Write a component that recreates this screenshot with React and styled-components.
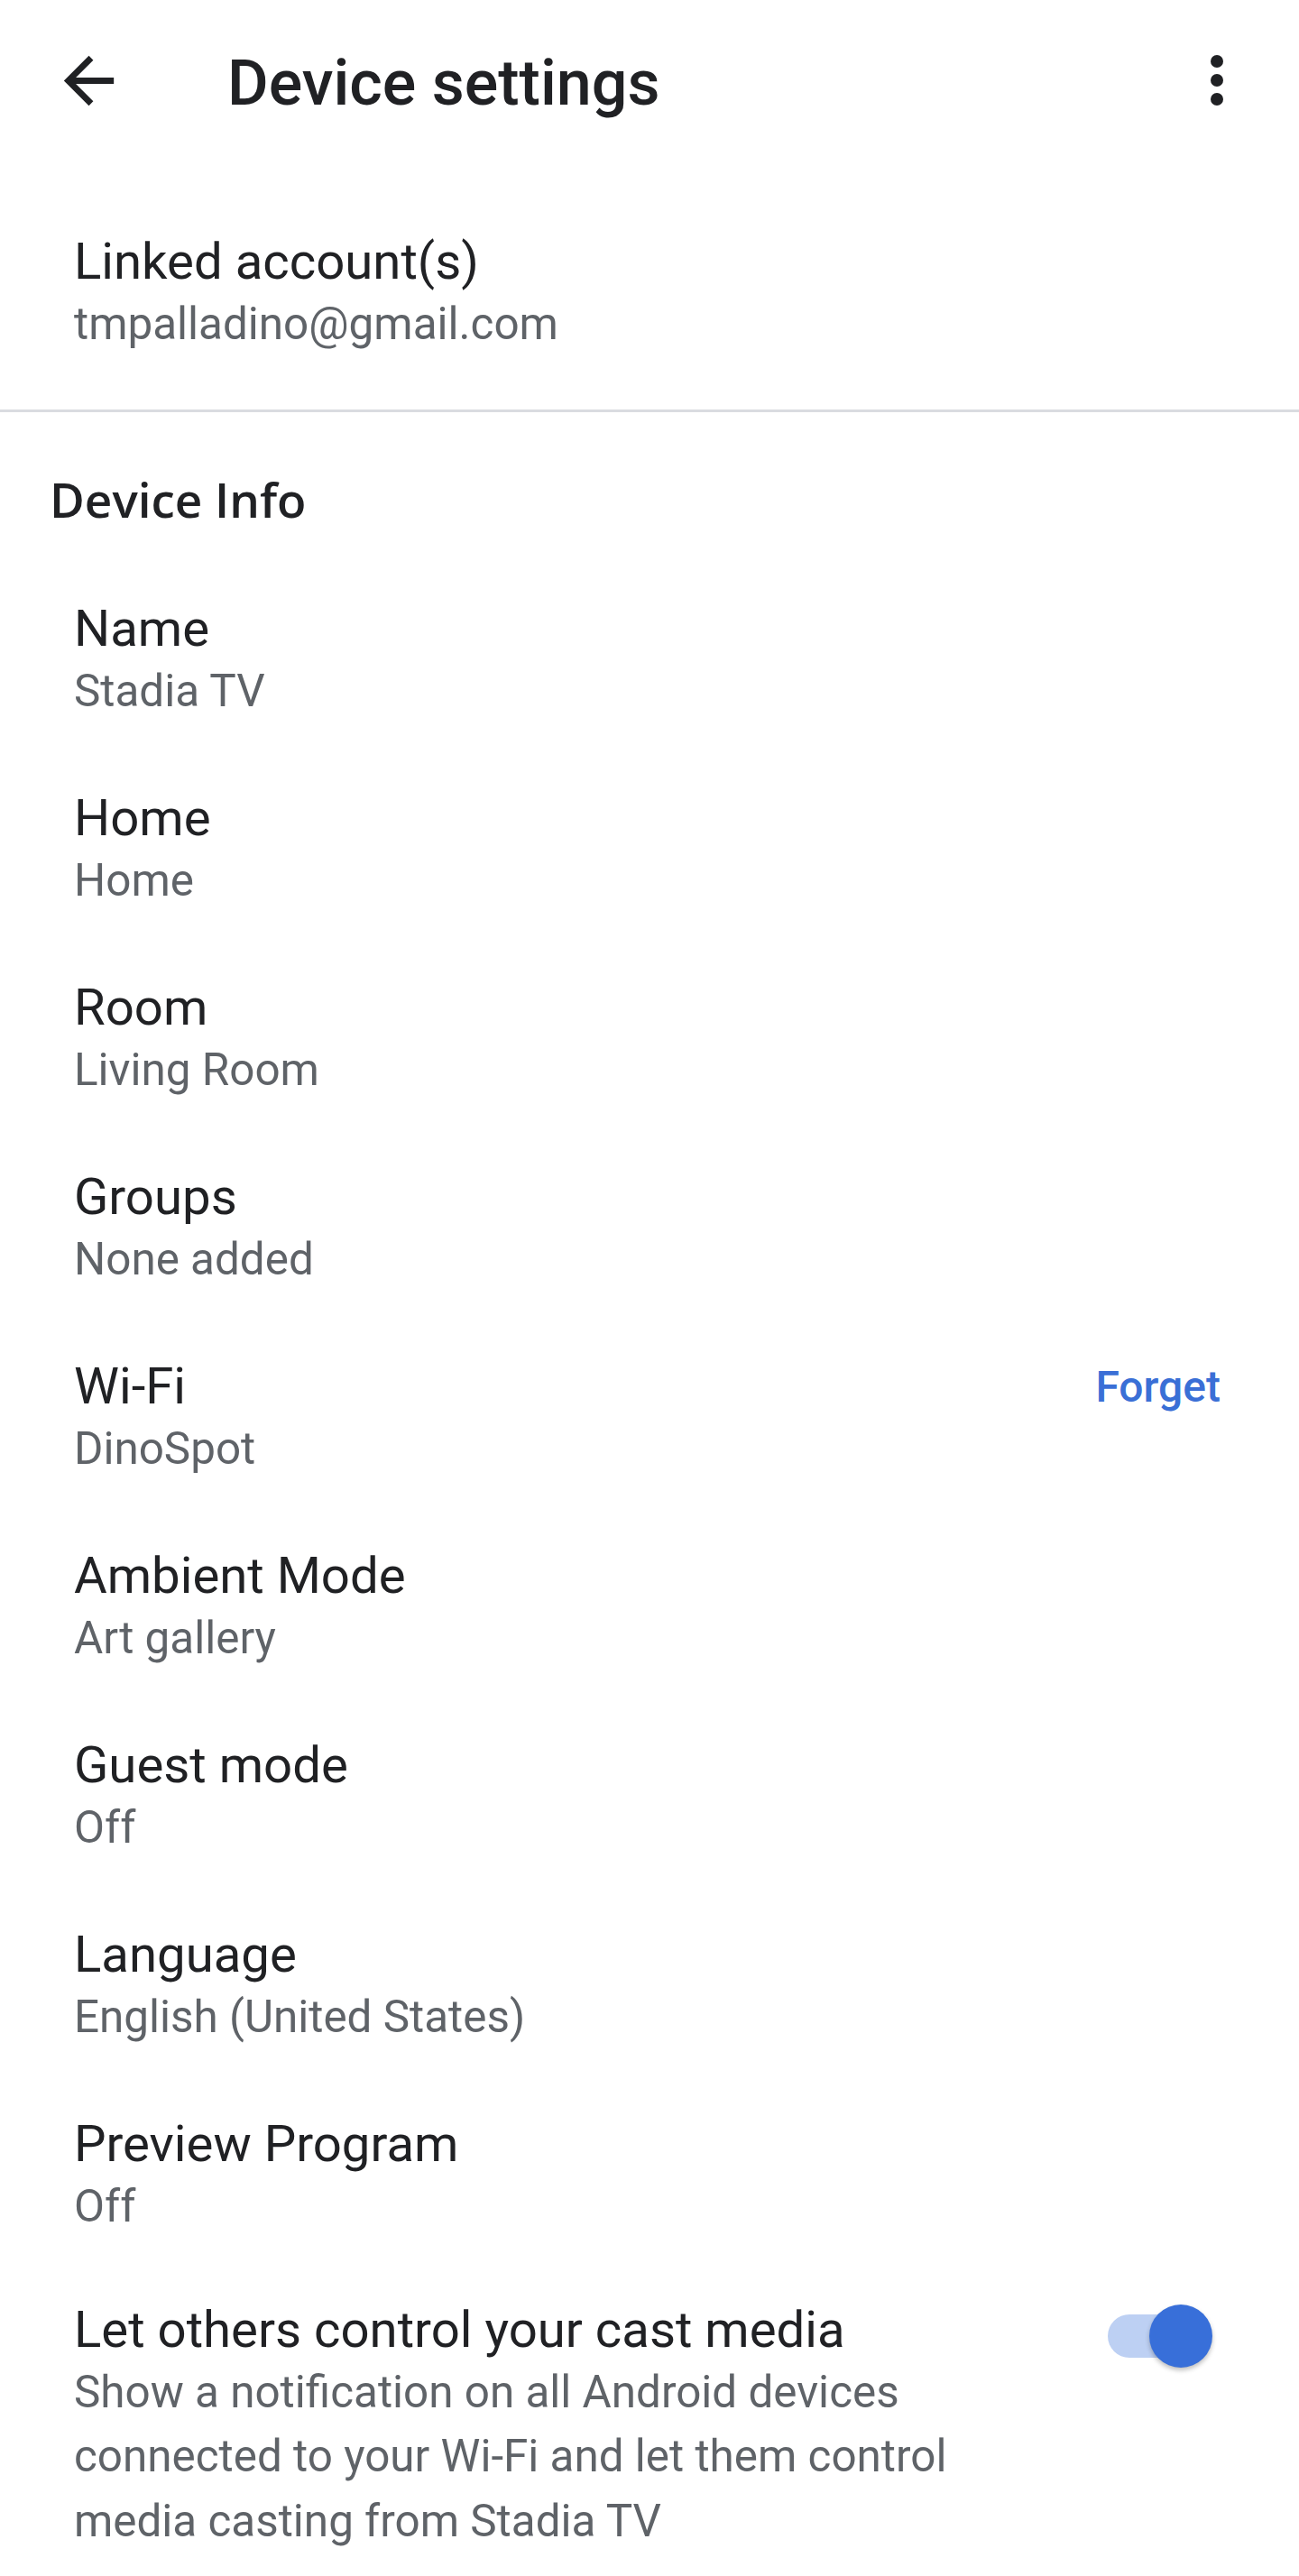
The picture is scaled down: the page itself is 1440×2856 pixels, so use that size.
import styled, { createGlobalStyle } from "styled-components";

const GlobalStyle = createGlobalStyle`
  html, body {
    margin: 0;
    padding: 0;
    background: #ffffff;
  }

  body {
    font-family: Roboto, "Noto Sans", "Liberation Sans", sans-serif;
    color: #202124;
  }
`;

const rows = [
  { title: "Name", value: "Stadia TV" },
  { title: "Home", value: "Home" },
  { title: "Room", value: "Living Room" },
  { title: "Groups", value: "None added" },
  { title: "Wi-Fi", value: "DinoSpot", action: "Forget" },
  { title: "Ambient Mode", value: "Art gallery" },
  { title: "Guest mode", value: "Off" },
  { title: "Language", value: "English (United States)" },
  { title: "Preview Program", value: "Off" },
];

function BackIcon() {
  return (
    <svg viewBox="0 0 24 24" width="83" height="83" fill="#202124">
      <path d="M20 11H7.83l5.59-5.59L12 4l-8 8 8 8 1.41-1.41L7.83 13H20v-2z" />
    </svg>
  );
}

function MoreIcon() {
  return (
    <svg viewBox="0 0 24 24" width="84" height="84" fill="#202124">
      <circle cx="12" cy="6" r="2" />
      <circle cx="12" cy="12" r="2" />
      <circle cx="12" cy="18" r="2" />
    </svg>
  );
}

function SettingRow({ title, value, action, tight, children }) {
  return (
    <Row $tight={tight}>
      <RowText>
        <RowTitle>{title}</RowTitle>
        <RowValue>{value}</RowValue>
      </RowText>
      {action && <RowAction>{action}</RowAction>}
      {children}
    </Row>
  );
}

export default function App() {
  return (
    <Page>
      <GlobalStyle />
      <Toolbar>
        <IconButton aria-label="Back">
          <BackIcon />
        </IconButton>
        <ToolbarTitle>Device settings</ToolbarTitle>
        <IconButton aria-label="More options">
          <MoreIcon />
        </IconButton>
      </Toolbar>

      <AccountSection>
        <SettingRow title="Linked account(s)" value="tmpalladino@gmail.com" />
      </AccountSection>

      <Section>
        <SectionHeader>Device Info</SectionHeader>
        {rows.map((row) => (
          <SettingRow key={row.title} {...row} />
        ))}
        <SettingRow
          tight
          title="Let others control your cast media"
          value="Show a notification on all Android devices connected to your Wi-Fi and let them control media casting from Stadia TV"
        >
          <Switch role="switch" aria-checked="true">
            <SwitchTrack />
            <SwitchThumb />
          </Switch>
        </SettingRow>
      </Section>
    </Page>
  );
}

const Page = styled.div`
  width: 1440px;
  min-height: 2856px;
  background: #ffffff;
`;

const Toolbar = styled.header`
  display: flex;
  align-items: center;
  height: 178px;
  padding: 0 49px 0 57px;
  box-sizing: border-box;
`;

const IconButton = styled.button`
  display: flex;
  align-items: center;
  justify-content: center;
  padding: 0;
  border: none;
  background: none;
  cursor: pointer;
`;

const ToolbarTitle = styled.h1`
  flex: 1;
  margin: 0 0 0 112px;
  padding-top: 6px;
  font-size: 70px;
  line-height: 82px;
  font-weight: 500;
  color: #202124;
`;

const AccountSection = styled.section`
  padding-top: 44px;
  padding-bottom: 22px;
  border-bottom: 3px solid #dadce0;
`;

const Section = styled.section`
  padding-top: 65px;
`;

const SectionHeader = styled.h2`
  margin: 0 0 43px;
  padding-left: 55px;
  font-family: "Open Sans", Roboto, sans-serif;
  font-size: 53px;
  line-height: 64px;
  font-weight: 600;
  color: #202124;
`;

const Row = styled.div`
  display: flex;
  align-items: flex-start;
  padding: ${(p) => (p.$tight ? "31px" : "35px")} 87px 36.4px 82px;
`;

const RowText = styled.div`
  flex: 1;
  min-width: 0;
  padding-right: 60px;
`;

const RowTitle = styled.div`
  font-size: 56.3px;
  line-height: 67px;
  font-weight: 400;
  color: #202124;
`;

const RowValue = styled.div`
  font-size: 49.4px;
  line-height: 71.6px;
  color: #5f6368;
`;

const RowAction = styled.span`
  flex: none;
  font-size: 48px;
  line-height: 67px;
  font-weight: 500;
  color: #3a6fd6;
  cursor: pointer;
`;

const Switch = styled.div`
  position: relative;
  flex: none;
  width: 116px;
  height: 70px;
  margin: 5px 9px 0 0;
`;

const SwitchTrack = styled.div`
  position: absolute;
  left: 0;
  top: 11px;
  width: 106px;
  height: 48px;
  border-radius: 24px;
  background: #bdd0f3;
`;

const SwitchThumb = styled.div`
  position: absolute;
  right: 0;
  top: 0;
  width: 70px;
  height: 70px;
  border-radius: 50%;
  background: #386fd9;
  box-shadow: 0 3px 5px rgba(0, 0, 0, 0.25);
`;
